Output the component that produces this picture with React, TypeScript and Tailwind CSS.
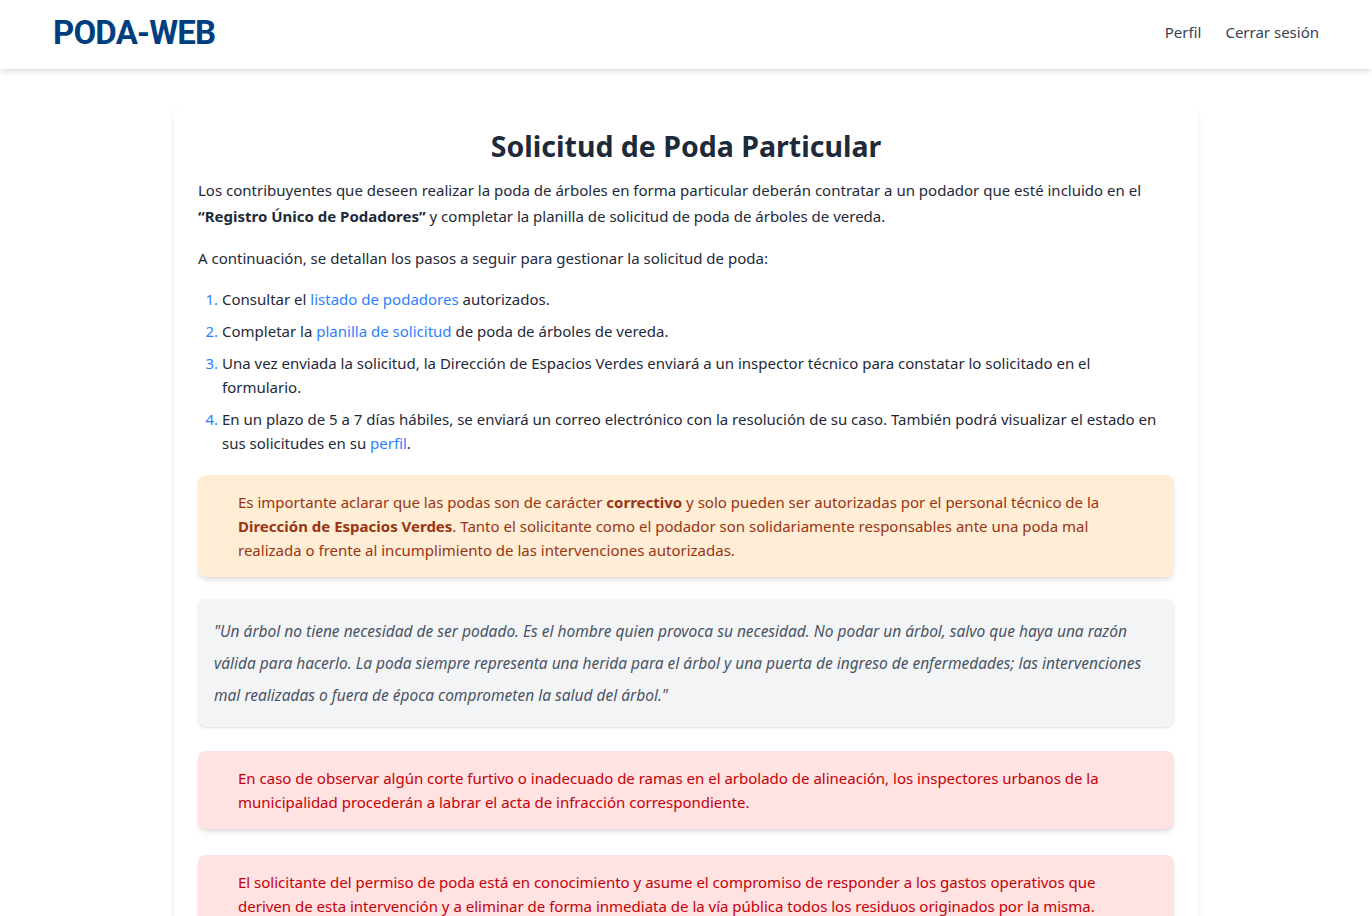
export default function App() {
  return (
    <div className="min-h-screen bg-white font-['Noto_Sans',sans-serif] text-[15px] text-gray-800">
      <header className="flex h-[69px] items-center justify-between bg-white px-[53px] pb-1 shadow-md">
        <h1 className="font-['Roboto',sans-serif] text-[33px] font-bold tracking-tight text-[#003f7f]">
          PODA-WEB
        </h1>

        <nav className="flex items-center gap-6 text-gray-700">
          <a href="#">Perfil</a>
          <a href="#">Cerrar sesión</a>
        </nav>
      </header>

      <main className="mx-auto mt-9 max-w-5xl rounded-xl bg-white px-6 pt-[23px] pb-10 shadow-md">
        <h2 className="mb-[13px] text-center text-[28.5px] leading-9 font-bold text-gray-800">
          Solicitud de Poda Particular
        </h2>

        <p className="mb-4 leading-[26px]">
          Los contribuyentes que deseen realizar la poda de árboles en forma particular deberán
          contratar a un podador que esté incluido en el{" "}
          <strong>“Registro Único de Podadores”</strong> y completar la planilla de solicitud de
          poda de árboles de vereda.
        </p>

        <p className="mb-4 leading-[26px]">
          A continuación, se detallan los pasos a seguir para gestionar la solicitud de poda:
        </p>

        <ol className="list-decimal space-y-2 pr-2 pl-6 leading-6 marker:text-blue-500">
          <li>
            Consultar el{" "}
            <a href="#" className="text-blue-500">
              listado de podadores
            </a>{" "}
            autorizados.
          </li>
          <li>
            Completar la{" "}
            <a href="#" className="text-blue-500">
              planilla de solicitud
            </a>{" "}
            de poda de árboles de vereda.
          </li>
          <li>
            Una vez enviada la solicitud, la Dirección de Espacios Verdes enviará a un inspector
            técnico para constatar lo solicitado en el formulario.
          </li>
          <li>
            En un plazo de 5 a 7 días hábiles, se enviará un correo electrónico con la resolución
            de su caso. También podrá visualizar el estado en sus solicitudes en su{" "}
            <a href="#" className="text-blue-500">
              perfil
            </a>
            .
          </li>
        </ol>

        <div className="mt-5 rounded-lg bg-[#ffedd5] px-10 py-[15px] leading-6 text-[#9a3412] shadow-md">
          Es importante aclarar que las podas son de carácter <strong>correctivo</strong> y solo
          pueden ser autorizadas por el personal técnico de la{" "}
          <strong>Dirección de Espacios Verdes</strong>. Tanto el solicitante como el podador son
          solidariamente responsables ante una poda mal realizada o frente al incumplimiento de las
          intervenciones autorizadas.
        </div>

        <blockquote className="mt-[22px] rounded-lg bg-gray-100 px-4 py-4 text-[15.5px] leading-8 text-gray-600 italic shadow-sm">
          "Un árbol no tiene necesidad de ser podado. Es el hombre quien provoca su necesidad. No
          podar un árbol, salvo que haya una razón válida para hacerlo. La poda siempre representa
          una herida para el árbol y una puerta de ingreso de enfermedades; las intervenciones mal
          realizadas o fuera de época comprometen la salud del árbol."
        </blockquote>

        <div className="mt-6 rounded-lg bg-red-100 px-10 py-[15px] leading-6 text-red-700 shadow-md">
          En caso de observar algún corte furtivo o inadecuado de ramas en el arbolado de
          alineación, los inspectores urbanos de la municipalidad procederán a labrar el acta de
          infracción correspondiente.
        </div>

        <div className="mt-[26px] rounded-lg bg-red-100 px-10 py-[15px] leading-6 text-red-700 shadow-md">
          El solicitante del permiso de poda está en conocimiento y asume el compromiso de
          responder a los gastos operativos que deriven de esta intervención y a eliminar de forma
          inmediata de la vía pública todos los residuos originados por la misma.
        </div>
      </main>
    </div>
  );
}
